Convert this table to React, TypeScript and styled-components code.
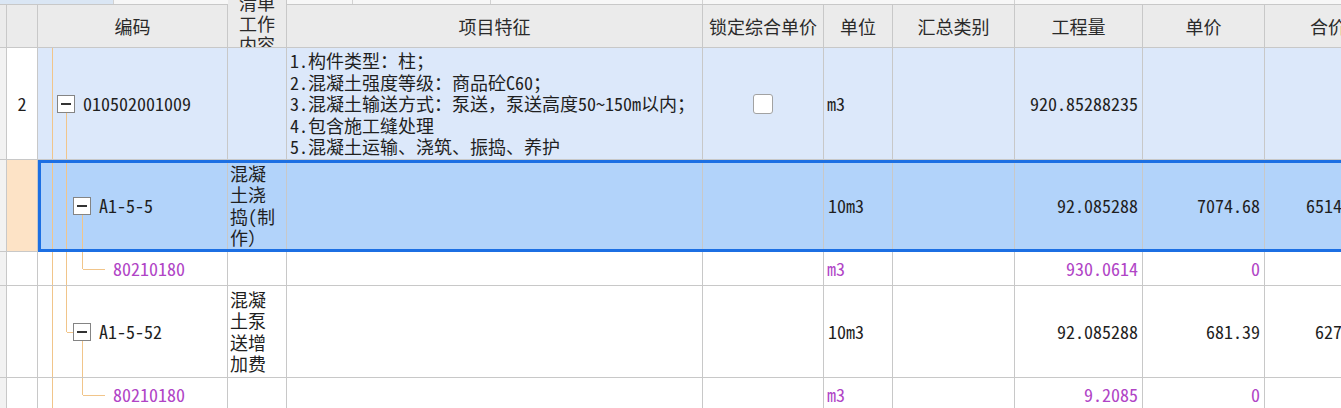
import React from 'react';
import styled, { createGlobalStyle, css } from 'styled-components';

const LINE = '#c8c8c8';
const COLS = '7px 31px 190px 59px 416px 121px 69px 122px 128px 122px 127px';
const MONO = `"Noto Sans Mono CJK SC", "Noto Sans CJK SC", monospace`;
const GUIDE = '#f1c58a';
const PURPLE = '#b044c6';

const Global = createGlobalStyle`
  html, body { margin: 0; padding: 0; background: #fff; }
  body { font-family: ${MONO}; }
`;

const Sheet = styled.div`
  width: 1341px;
  height: 408px;
  overflow: hidden;
  background: #fff;
`;

const HeaderBand = styled.div`
  display: grid;
  grid-template-columns: ${COLS};
  grid-template-rows: 5px 43px;
  width: 1392px;
`;

const TopStrip = styled.div`
  grid-column: 1 / -1;
  grid-row: 1;
  display: flex;
  background: #f7f7f7;
  border-bottom: 1px solid ${LINE};
  box-sizing: border-box;
`;

const StripSeg = styled.div<{ $w: number; $tint?: boolean }>`
  flex: 0 0 ${(p) => p.$w}px;
  box-sizing: border-box;
  border-right: 1px solid #d2d2d2;
  background: ${(p) => (p.$tint ? '#dae6f4' : 'transparent')};
`;

const HeadCell = styled.div<{ $col: number; $tall?: boolean }>`
  grid-column: ${(p) => p.$col};
  grid-row: ${(p) => (p.$tall ? '1 / 3' : '2')};
  background: #ebebeb;
  border-right: 1px solid ${LINE};
  border-bottom: 1px solid ${LINE};
  box-sizing: border-box;
  display: flex;
  align-items: center;
  justify-content: center;
  overflow: hidden;
  font-family: "Noto Sans CJK SC", sans-serif;
  font-size: 18px;
  line-height: 21px;
  color: #2a2a2a;
  white-space: pre-line;
  text-align: center;
`;

const Row = styled.div<{ $h: number; $bg?: string; $selected?: boolean }>`
  display: grid;
  grid-template-columns: ${COLS};
  width: 1392px;
  height: ${(p) => p.$h}px;
  background: ${(p) => p.$bg ?? '#fff'};
  position: relative;
  ${(p) =>
    p.$selected &&
    css`
      &::after {
        content: '';
        position: absolute;
        left: 38px;
        top: 0;
        right: 0;
        bottom: 0;
        border: 3px solid #1c6fe3;
        pointer-events: none;
      }
    `}
`;

type Align = 'left' | 'center' | 'right';

const Cell = styled.div<{
  $bg?: string;
  $align?: Align;
  $top?: boolean;
  $color?: string;
  $pl?: number;
  $pr?: number;
  $pt?: number;
}>`
  position: relative;
  box-sizing: border-box;
  background: ${(p) => p.$bg ?? 'transparent'};
  border-right: 1px solid ${LINE};
  border-bottom: 1px solid ${LINE};
  display: flex;
  align-items: ${(p) => (p.$top ? 'flex-start' : 'center')};
  justify-content: ${(p) =>
    p.$align === 'right' ? 'flex-end' : p.$align === 'center' ? 'center' : 'flex-start'};
  padding: ${(p) => p.$pt ?? 0}px ${(p) => p.$pr ?? 0}px 0 ${(p) => p.$pl ?? 0}px;
  font-size: 18px;
  line-height: 21.5px;
  color: ${(p) => p.$color ?? '#1f1f1f'};
  white-space: pre-line;
  overflow: hidden;
`;

const Lead = styled(Cell)`
  background: #f2f2f2;
`;

const GuideLayer = styled.svg`
  position: absolute;
  left: 0;
  top: 0;
  width: 100%;
  height: 100%;
  pointer-events: none;
`;

const ExpandBox = styled.span`
  position: relative;
  flex: 0 0 18px;
  width: 18px;
  height: 18px;
  box-sizing: border-box;
  border: 1px solid #848484;
  background: #fff;
  display: flex;
  align-items: center;
  justify-content: center;
  margin-right: 8px;
  &::before {
    content: '';
    width: 10px;
    height: 2px;
    background: #333;
  }
`;

const Check = styled.span`
  width: 20px;
  height: 20px;
  box-sizing: border-box;
  border: 1px solid #a2a2a2;
  border-radius: 3px;
  background: #fff;
`;

type Seg = [number, number, number, number];

const Guides: React.FC<{ segs: Seg[] }> = ({ segs }) => (
  <GuideLayer>
    {segs.map(([x1, y1, x2, y2], i) => (
      <line
        key={i}
        x1={x1 + 0.5}
        y1={y1}
        x2={x2 + (x1 === x2 ? 0.5 : 0)}
        y2={y2 + (y1 === y2 ? 0.5 : 0)}
        stroke={GUIDE}
        strokeWidth={1}
        shapeRendering="crispEdges"
      />
    ))}
  </GuideLayer>
);

const TreeCell: React.FC<{
  indent: number;
  expandable?: boolean;
  color?: string;
  segs: Seg[];
  children: React.ReactNode;
}> = ({ indent, expandable, color, segs, children }) => (
  <Cell $pl={indent} $color={color}>
    <Guides segs={segs} />
    {expandable && <ExpandBox />}
    <span>{children}</span>
  </Cell>
);

const headers: { label: string; tall?: boolean }[] = [
  { label: '' },
  { label: '' },
  { label: '编码' },
  { label: '清单\n工作\n内容', tall: true },
  { label: '项目特征' },
  { label: '锁定综合单价' },
  { label: '单位' },
  { label: '汇总类别' },
  { label: '工程量' },
  { label: '单价' },
  { label: '合价' },
];

const feature =
  '1.构件类型：柱；\n2.混凝土强度等级：商品砼C60；\n3.混凝土输送方式：泵送，泵送高度50~150m以内；\n4.包含施工缝处理\n5.混凝土运输、浇筑、振捣、养护';

export default function App() {
  return (
    <>
      <Global />
      <Sheet>
        <HeaderBand>
          <TopStrip>
            <StripSeg $w={114} $tint />
            <StripSeg $w={239} />
            <StripSeg $w={138} />
            <StripSeg $w={212} />
            <StripSeg $w={312} />
          </TopStrip>
          {headers.map((h, i) => (
            <HeadCell key={i} $col={i + 1} $tall={h.tall}>
              {h.label}
            </HeadCell>
          ))}
        </HeaderBand>

        <Row $h={112} $bg="#dce8fa">
          <Lead />
          <Cell $bg="#fff" $align="center">2</Cell>
          <TreeCell
            indent={19}
            expandable
            segs={[
              [14, 0, 14, 112],
              [28, 65, 28, 112],
            ]}
          >
            010502001009
          </TreeCell>
          <Cell />
          <Cell $top $pl={3} $pt={2}>{feature}</Cell>
          <Cell $align="center"><Check /></Cell>
          <Cell $pl={3}>m3</Cell>
          <Cell />
          <Cell $align="right" $pr={4}>920.85288235</Cell>
          <Cell />
          <Cell />
        </Row>

        <Row $h={92} $bg="#b2d3fa" $selected>
          <Lead />
          <Cell $bg="#fde3c6" />
          <TreeCell
            indent={35}
            expandable
            segs={[
              [14, 0, 14, 92],
              [28, 0, 28, 92],
              [44, 55, 44, 92],
            ]}
          >
            A1-5-5
          </TreeCell>
          <Cell $pl={2}>{'混凝\n土浇\n捣(制\n作）'}</Cell>
          <Cell />
          <Cell />
          <Cell $pl={4}>10m3</Cell>
          <Cell />
          <Cell $align="right" $pr={4}>92.085288</Cell>
          <Cell $align="right" $pr={4}>7074.68</Cell>
          <Cell $align="right" $pr={4}>651473.95</Cell>
        </Row>

        <Row $h={34}>
          <Lead />
          <Cell />
          <TreeCell
            indent={75}
            color={PURPLE}
            segs={[
              [14, 0, 14, 34],
              [28, 0, 28, 34],
              [44, 0, 44, 17],
              [44, 17, 67, 17],
            ]}
          >
            80210180
          </TreeCell>
          <Cell />
          <Cell />
          <Cell />
          <Cell $pl={3} $color={PURPLE}>m3</Cell>
          <Cell />
          <Cell $align="right" $pr={4} $color={PURPLE}>930.0614</Cell>
          <Cell $align="right" $pr={4} $color={PURPLE}>0</Cell>
          <Cell />
        </Row>

        <Row $h={92}>
          <Lead />
          <Cell />
          <TreeCell
            indent={35}
            expandable
            segs={[
              [14, 0, 14, 92],
              [28, 0, 28, 46],
              [28, 46, 35, 46],
              [44, 55, 44, 92],
            ]}
          >
            A1-5-52
          </TreeCell>
          <Cell $pl={2}>{'混凝\n土泵\n送增\n加费'}</Cell>
          <Cell />
          <Cell />
          <Cell $pl={4}>10m3</Cell>
          <Cell />
          <Cell $align="right" $pr={4}>92.085288</Cell>
          <Cell $align="right" $pr={4}>681.39</Cell>
          <Cell $align="right" $pr={4}>62745.99</Cell>
        </Row>

        <Row $h={34}>
          <Lead />
          <Cell />
          <TreeCell
            indent={75}
            color={PURPLE}
            segs={[
              [14, 0, 14, 34],
              [44, 0, 44, 17],
              [44, 17, 67, 17],
            ]}
          >
            80210180
          </TreeCell>
          <Cell />
          <Cell />
          <Cell />
          <Cell $pl={3} $color={PURPLE}>m3</Cell>
          <Cell />
          <Cell $align="right" $pr={4} $color={PURPLE}>9.2085</Cell>
          <Cell $align="right" $pr={4} $color={PURPLE}>0</Cell>
          <Cell />
        </Row>
      </Sheet>
    </>
  );
}
